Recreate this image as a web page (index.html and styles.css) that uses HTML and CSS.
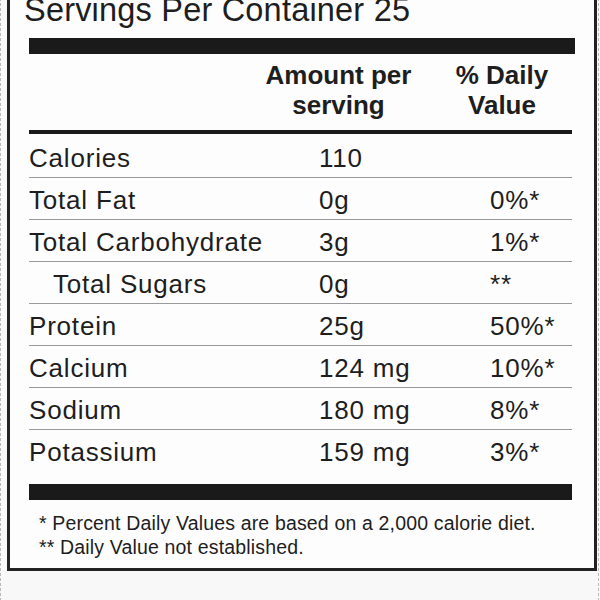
FILE: index.html
```html
<!DOCTYPE html>
<html lang="en">
<head>
<meta charset="utf-8">
<title>Supplement Facts</title>
<link rel="stylesheet" href="styles.css">
</head>
<body>
<div class="frame">
  <section class="label">
    <p class="servings">Servings Per Container 25</p>
    <div class="bar bar-top"></div>
    <div class="table">
      <div class="head">
        <div class="h-amt">Amount per<br>serving</div>
        <div class="h-dv">% Daily<br>Value</div>
      </div>
      <div class="head-rule"></div>
      <div class="rows">
        <div class="row"><span class="name">Calories</span><span class="amt">110</span><span class="dv"></span></div>
        <div class="row"><span class="name">Total Fat</span><span class="amt">0g</span><span class="dv">0%*</span></div>
        <div class="row"><span class="name">Total Carbohydrate</span><span class="amt">3g</span><span class="dv">1%*</span></div>
        <div class="row"><span class="name sub">Total Sugars</span><span class="amt">0g</span><span class="dv">**</span></div>
        <div class="row"><span class="name">Protein</span><span class="amt">25g</span><span class="dv">50%*</span></div>
        <div class="row"><span class="name">Calcium</span><span class="amt">124 mg</span><span class="dv">10%*</span></div>
        <div class="row"><span class="name">Sodium</span><span class="amt">180 mg</span><span class="dv">8%*</span></div>
        <div class="row"><span class="name">Potassium</span><span class="amt">159 mg</span><span class="dv">3%*</span></div>
      </div>
      <div class="bar bar-bottom"></div>
    </div>
    <div class="notes">
      <p>* Percent Daily Values are based on a 2,000 calorie diet.</p>
      <p>** Daily Value not established.</p>
    </div>
  </section>
</div>
</body>
</html>
```

FILE: styles.css
```css
html, body {
  margin: 0;
  padding: 0;
  background: #f8f8f8;
}

body {
  font-family: "Liberation Sans", Arial, Helvetica, sans-serif;
  color: #1e1e1e;
}

.frame {
  box-sizing: border-box;
  width: 599px;
  margin-top: -22px;
  padding-bottom: 60px;
  border-left: 1px dashed #b8b8b8;
  border-right: 1px dashed #b8b8b8;
}

.label {
  margin: 0 1px 0 6px;
  border: 3px solid #222;
  background: #fdfdfd;
  padding: 10px 14px 9px 14px;
}

.servings {
  margin: 0;
  font-size: 32.5px;
  line-height: 38px;
  letter-spacing: 0.2px;
  white-space: nowrap;
}

.bar {
  background: #1a1a1a;
}

.bar-top {
  height: 16px;
  margin: 9px 5px 0 5px;
}

.table {
  margin: 0 8px 0 5px;
}

.head {
  display: flex;
  justify-content: flex-end;
  padding: 6px 20px 0 0;
  font-size: 26px;
  font-weight: 700;
  line-height: 30px;
}

.h-amt {
  width: 150px;
  text-align: center;
  white-space: nowrap;
}

.h-dv {
  width: 100px;
  margin-left: 38.5px;
  text-align: center;
  white-space: nowrap;
}

.head-rule {
  height: 4px;
  margin-top: 10px;
  background: #1a1a1a;
}

.rows {
  margin-top: 2px;
}

.row {
  display: grid;
  grid-template-columns: 290px 171px 1fr;
  box-sizing: border-box;
  height: 42px;
  padding-top: 3px;
  font-size: 26px;
  line-height: 38px;
  letter-spacing: 0.8px;
  border-bottom: 1px solid #9a9a9a;
  white-space: nowrap;
}

.row:last-child {
  height: 41px;
  border-bottom: none;
}

.name.sub {
  padding-left: 24px;
}

.bar-bottom {
  height: 16px;
  margin-top: 13px;
}

.notes {
  margin: 11px 0 0 15px;
  font-size: 19.5px;
  line-height: 24px;
  letter-spacing: 0.16px;
}

.notes p {
  margin: 0;
  white-space: nowrap;
}
```
